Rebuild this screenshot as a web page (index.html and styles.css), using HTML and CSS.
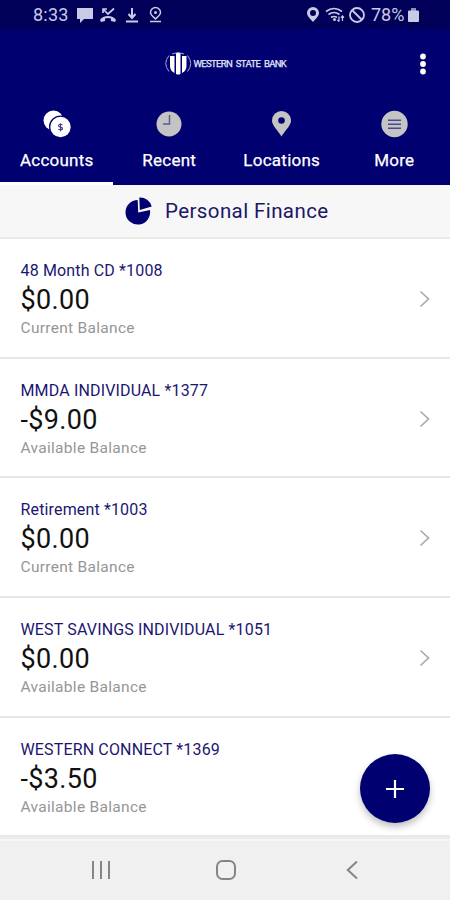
FILE: index.html
```html
<!DOCTYPE html>
<html lang="en">
<head>
<meta charset="utf-8">
<title>Western State Bank</title>
<link rel="stylesheet" href="styles.css">
</head>
<body>
<div class="app">
  <div class="status">
    <span class="time">8:33</span>
    <svg class="notices" width="90" height="18" viewBox="0 0 90 18" fill="currentColor">
      <path d="M1 2h16v11H8l-4 4v-4H1z"/>
      <path d="M25 16l-1-2c3-5.500 13-5.500 16 0l-1 2-4-1v-2.500q-3-1-6 0V15z"/>
      <path d="M27 7V3h4M27 3l5 5 6-5.500" fill="none" stroke="currentColor" stroke-width="1.700"/>
      <path d="M56 2v9M52.500 8l3.500 4L59.500 8M50 15.500h12" fill="none" stroke="currentColor" stroke-width="2"/>
      <path d="M79.500 13c-2-2-5-4-5-6.500a5 5 0 0 1 10 0c0 2.500-3 4.500-5 6.500zM74 15.500h11" fill="none" stroke="currentColor" stroke-width="1.500"/>
      <circle cx="79.500" cy="6.500" r="1.500"/>
    </svg>
    <svg class="signals" width="62" height="18" viewBox="0 0 62 18" fill="currentColor">
      <path fill-rule="evenodd" d="M7 16C4 12.500 1 10 1 7a6 6 0 0 1 12 0c0 3-3 5.500-6 9zM7 4a3 3 0 1 0 0 6 3 3 0 0 0 0-6z"/>
      <path d="M20 5.500q8-6 16 0M22.500 8.500q5.500-4 11 0M25 11.500q3-2 6 0" fill="none" stroke="currentColor" stroke-width="1.700"/>
      <circle cx="28.500" cy="13.500" r="1.500"/>
      <path d="M33 10.500v5m-1.700-1.700L33 15.500M36.500 15v-5m-1.500 1.700 1.500-1.700 1.500 1.700" fill="none" stroke="currentColor" stroke-width="1.200"/>
      <g fill="none" stroke="currentColor" stroke-width="1.800"><circle cx="51" cy="9" r="7"/><path d="M46 4l10 10"/></g>
    </svg>
    <span class="percent">78%</span>
    <svg class="battery" width="11" height="16" viewBox="0 0 11 16"><path fill="currentColor" opacity=".7" d="M3 1h5v3H3z"/><path fill="currentColor" d="M1 3.500h9q1 0 1 1V14q0 1-1 1H1q-1 0-1-1V4.500q0-1 1-1z"/></svg>
  </div>
  <header class="header">
    <div class="brand">
      <svg width="28" height="24" viewBox="0 0 28 24" fill="#fff">
        <path d="M6 4h4.500v17Q6 19 6 14zM12 1h4.500v21q-2.200 1-4.500 0zM18 4h4.500v10q0 5-4.500 7z"/>
        <path d="M5 3.500q-6.500 8 0 16M23.500 3.500q6.500 8 0 16M8 2q6-3 12 0" fill="none" stroke="#a0a6d6" stroke-width="1"/>
      </svg>
      <span class="brand-name">WESTERN STATE BANK</span>
    </div>
    <svg class="kebab" width="8" height="22" viewBox="0 0 8 22" fill="#fff"><circle cx="4" cy="3.500" r="2.900"/><circle cx="4" cy="11" r="2.900"/><circle cx="4" cy="18.500" r="2.900"/></svg>
  </header>
  <nav class="tabs">
    <div class="tab active">
      <svg width="28" height="28" viewBox="0 0 28 28"><circle cx="10.500" cy="10.500" r="10" fill="#fff"/><circle cx="17.500" cy="17" r="11.500" fill="#000070"/><circle cx="17.500" cy="17" r="10.200" fill="#fff"/><path d="M19.500 15c-1-1.200-4-1.100-4 .7 0 1.900 4 .9 4 2.800 0 1.800-3.300 1.800-4.200.5M17.500 13.200v8" fill="none" stroke="#3a3a88" stroke-width="1.100"/></svg>
      <span>Accounts</span>
    </div>
    <div class="tab">
      <svg width="28" height="28" viewBox="0 0 28 28"><circle cx="14" cy="14" r="12.500" fill="#c4c4c4"/><path d="M14.500 5v9H8" fill="none" stroke="#5a5a98" stroke-width="1.500"/></svg>
      <span>Recent</span>
    </div>
    <div class="tab">
      <svg width="28" height="28" viewBox="0 0 28 28"><path fill="#c4c4c4" fill-rule="evenodd" d="M13.500 26.500C10 20.500 4 15.500 4 10.500a9.500 9.500 0 0 1 19 0c0 5-6 10-9.500 16zM13.500 7.200a3.300 3.300 0 1 0 0 6.600 3.300 3.300 0 0 0 0-6.600z"/></svg>
      <span>Locations</span>
    </div>
    <div class="tab">
      <svg width="28" height="28" viewBox="0 0 28 28"><circle cx="14.500" cy="14" r="13.200" fill="#c4c4c4"/><path d="M8 10.300h13M8 14.300h13M8 18.300h13" stroke="#4a4a90" stroke-width="1.400"/></svg>
      <span>More</span>
    </div>
  </nav>
  <div class="finance">
    <svg width="28" height="28" viewBox="0 0 28 28" fill="#000070"><path d="M12.700 3A12.300 12.300 0 1 0 24.900 13L13.200 15.500z"/><path d="M14.300.5A12 12 0 0 1 26.700 9.500L14.800 13z"/></svg>
    <span>Personal Finance</span>
  </div>
  <main class="accounts">
    <div class="row"><div><div class="name">48 Month CD *1008</div><div class="amount">$0.00</div><div class="label">Current Balance</div></div><svg class="chevron" width="12" height="18" viewBox="0 0 12 18"><path d="M1.500 1.500L9.500 9l-8 7.500"/></svg></div>
    <div class="row"><div><div class="name">MMDA INDIVIDUAL *1377</div><div class="amount">-$9.00</div><div class="label">Available Balance</div></div><svg class="chevron" width="12" height="18" viewBox="0 0 12 18"><path d="M1.500 1.500L9.500 9l-8 7.500"/></svg></div>
    <div class="row"><div><div class="name">Retirement *1003</div><div class="amount">$0.00</div><div class="label">Current Balance</div></div><svg class="chevron" width="12" height="18" viewBox="0 0 12 18"><path d="M1.500 1.500L9.500 9l-8 7.500"/></svg></div>
    <div class="row"><div><div class="name">WEST SAVINGS INDIVIDUAL *1051</div><div class="amount">$0.00</div><div class="label">Available Balance</div></div><svg class="chevron" width="12" height="18" viewBox="0 0 12 18"><path d="M1.500 1.500L9.500 9l-8 7.500"/></svg></div>
    <div class="row"><div><div class="name">WESTERN CONNECT *1369</div><div class="amount">-$3.50</div><div class="label">Available Balance</div></div></div>
  </main>
  <div class="fab"><svg width="20" height="20" viewBox="0 0 20 20"><path d="M10 1v18M1 10h18" stroke="#fff" stroke-width="2.200"/></svg></div>
  <footer class="navbar">
    <svg width="20" height="20" viewBox="0 0 20 20"><path d="M2 1v18M10 1v18M18 1v18"/></svg>
    <svg width="22" height="20" viewBox="0 0 22 20"><rect x="2" y="1" width="18" height="18" rx="5.500"/></svg>
    <svg class="back" width="12" height="20" viewBox="0 0 12 20"><path d="M11 1.500L1.800 10l9.200 8.500"/></svg>
  </footer>
</div>
</body>
</html>
```
FILE: styles.css
```css
* { box-sizing: border-box; }
body { margin: 0; background: #fff; font-family: Roboto, sans-serif; }
svg { display: block; flex: none; }
.app { position: relative; width: 450px; height: 900px; display: flex; flex-direction: column; overflow: hidden; }
.status { height: 29px; background: #000059; color: #c9cbe6; display: flex; align-items: center; padding: 0 31px 0 33px; font-size: 18px; }
.time { width: 43px; letter-spacing: 0.2px; }
.signals { margin-left: auto; }
.percent { margin-left: 3px; width: 37px; }
.header { height: 69px; background: #000070; display: flex; align-items: center; justify-content: space-between; padding: 0 23px 0 164px; }
.brand { display: flex; align-items: center; gap: 1.5px; }
.brand-name { color: #e6e8f8; font-size: 9.5px; white-space: nowrap; letter-spacing: -0.65px; word-spacing: 2px; -webkit-text-stroke: 0.25px currentColor; }
.tabs { height: 87px; background: #000070; display: grid; grid-template-columns: repeat(4, 1fr); }
.tab { display: flex; flex-direction: column; align-items: center; padding: 12px 0 0 1px; gap: 11px; color: #fff; font-size: 17px; line-height: 22px; letter-spacing: 0.25px; }
.tab span { -webkit-text-stroke: 0.25px currentColor; }
.active { border-bottom: 3px solid #fff; }
.finance { height: 54px; background: #f7f7f7; border-bottom: 2px solid #e9e9e9; display: flex; align-items: center; gap: 12px; padding-left: 125px; color: #1b1666; font-size: 20.5px; letter-spacing: 0.4px; }
.accounts { height: 597px; display: grid; grid-template-rows: repeat(5, 119.7px); }
.row { display: flex; align-items: center; justify-content: space-between; padding: 2.5px 19px 0 20.5px; border-bottom: 2px solid #e7e7e7; }
.name { color: #1b1670; font-size: 16px; line-height: 22px; letter-spacing: 0.15px; }
.amount { color: #111; font-size: 27px; line-height: 36px; letter-spacing: 0.35px; }
.label { color: #969696; font-size: 15.5px; line-height: 20px; letter-spacing: 0.3px; }
.chevron { fill: none; stroke: #aaa; stroke-width: 1.7; }
.fab { position: absolute; left: 360px; top: 754px; width: 70px; height: 69px; border-radius: 50%; background: #000070; display: flex; align-items: center; justify-content: center; box-shadow: 0 4px 7px rgba(0,0,0,.25); }
.navbar { height: 64px; background: #f0f0f0; border-top: 3px solid #ebebeb; box-shadow: inset 0 2px #f6f6f6; display: flex; align-items: center; padding: 1px 92px 0 91px; fill: none; stroke: #858585; stroke-width: 2; gap: 104px; }
.navbar .back { margin-left: 5px; }
```
